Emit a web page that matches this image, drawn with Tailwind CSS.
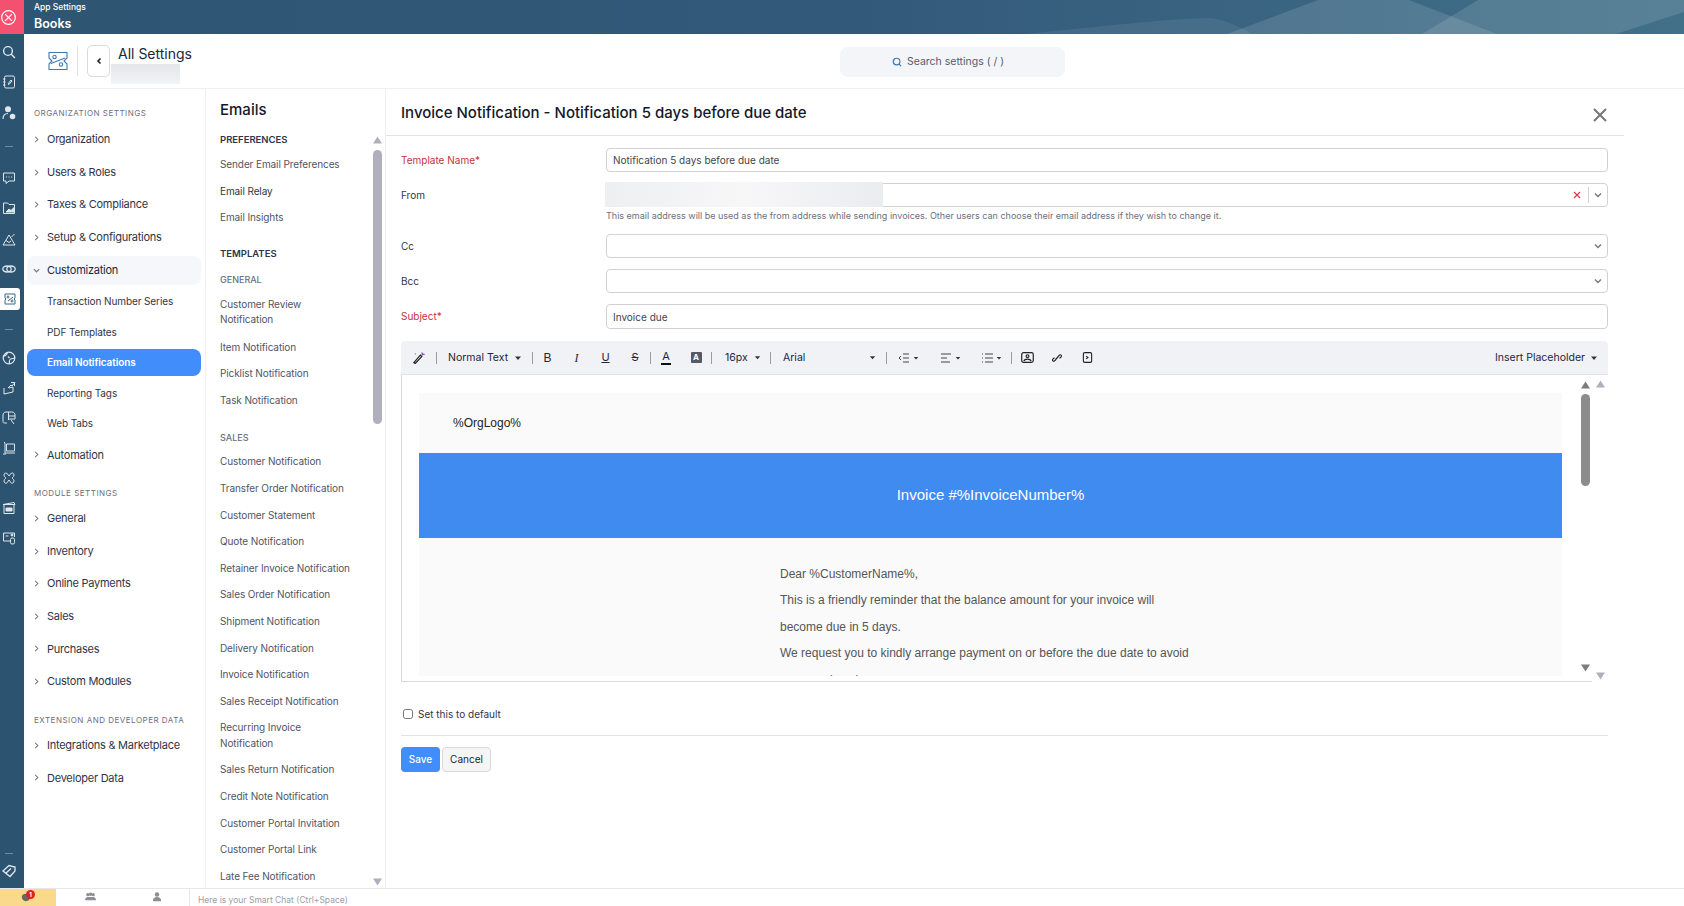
<!DOCTYPE html>
<html lang="en">
<head>
<title>Books - Email Notifications</title>
<meta charset="UTF-8">
<script src="https://cdn.jsdelivr.net/npm/@tailwindcss/browser@4"></script>
</head>
<body class="[font-family:Inter,sans-serif] bg-white text-[#21263c] overflow-hidden">
<svg class="hidden">
  <symbol id="chev-r" viewBox="0 0 8 8"><path d="M2.5 1l3 3-3 3" fill="none" stroke="#777" stroke-width="1.2"/></symbol>
  <symbol id="chev-d" viewBox="0 0 8 8"><path d="M1 2.5l3 3 3-3" fill="none" stroke="#777" stroke-width="1.4"/></symbol>
  <symbol id="caret" viewBox="0 0 8 8"><path d="M1 2.5h6L4 6z" fill="#333"/></symbol>
  <symbol id="arrow-up" viewBox="0 0 10 8"><path d="M5 .5L9.5 7.5H.5z"/></symbol>
  <symbol id="arrow-down" viewBox="0 0 10 8"><path d="M.5 .5h9L5 7.5z"/></symbol>
</svg>
<div class="flex flex-col h-[906px] w-[1684px] overflow-hidden">
  <div class="flex h-[888px]">
    <!-- app rail -->
    <aside class="w-6 shrink-0 bg-[#2c5370] flex flex-col items-start text-[#dfe7ec]">
      <div class="w-6 h-[34px] bg-[#f4506f] flex items-center justify-center shrink-0">
        <svg viewBox="0 0 20 20" class="w-[17px] h-[17px] -ml-[7px]" fill="none" stroke="#fff" stroke-width="1.4"><circle cx="10" cy="10" r="8"/><path d="M6 6l8 8M14 6l-8 8"/></svg>
      </div>
      <div class="h-[3px]"></div>
      <div class="w-5 h-[30px] flex items-center justify-center -ml-[1px]"><svg viewBox="0 0 14 14" class="w-[14px] h-[14px]" fill="none" stroke="currentColor" stroke-width="1.4"><circle cx="6" cy="6" r="4.4"/><path d="M9.3 9.3l3.6 3.6"/></svg></div>
      <div class="w-5 h-[30px] flex items-center justify-center -ml-[1px]"><svg viewBox="0 0 14 14" class="w-[14px] h-[14px]" fill="none" stroke="currentColor"><rect x="2.5" y="1" width="10" height="12" rx="1.5"/><path d="M1 4h2.5M1 7h2.5M1 10h2.5M6 9l3-4 1 1-3 3.5z"/></svg></div>
      <div class="w-5 h-[32px] flex items-center justify-center -ml-[1px]"><svg viewBox="0 0 14 14" class="w-[14px] h-[14px]" fill="none" stroke="currentColor" stroke-width="1.2"><circle cx="6" cy="3.2" r="2.4" fill="currentColor"/><path d="M1 13c0-4 2.5-5.5 5-5.5"/><circle cx="10.5" cy="10.5" r="2.2" fill="currentColor"/></svg></div>
      <div class="w-5 h-[34px] flex items-center justify-center -ml-[1px]"><div class="w-2 h-px bg-[#6f8da1]"></div></div>
      <div class="w-5 h-[30px] flex items-center justify-center -ml-[1px]"><svg viewBox="0 0 14 14" class="w-[14px] h-[14px]" fill="none" stroke="currentColor"><path d="M1.5 2h11v8H7l-3 2.5V10H1.5z"/><path d="M4 6h1M6.5 6h1M9 6h1"/></svg></div>
      <div class="w-5 h-[30px] flex items-center justify-center -ml-[1px]"><svg viewBox="0 0 14 14" class="w-[14px] h-[14px]" fill="none" stroke="currentColor"><path d="M1.5 12.5V2h4l1.5 1.5h5.500V12.500z"/><path d="M4 11l3-3 2 1.500 3-3V11z" fill="currentColor"/></svg></div>
      <div class="w-5 h-[32px] flex items-center justify-center -ml-[1px]"><svg viewBox="0 0 14 14" class="w-[14px] h-[14px]" fill="none" stroke="currentColor"><path d="M1 13L7 3l6 10zM4 8.500l3 2 2-1.500M9.500 5l3-3"/></svg></div>
      <div class="w-5 h-[28px] flex items-center justify-center -ml-[1px]"><svg viewBox="0 0 14 14" class="w-[14px] h-[14px]" fill="none" stroke="currentColor" stroke-width="1.3"><ellipse cx="5" cy="7" rx="4.200" ry="3"/><ellipse cx="9" cy="7" rx="4.200" ry="3"/></svg></div>
      <div class="w-5 h-[22px] my-[5px] bg-white rounded-r-[3px] flex items-center justify-center"><svg viewBox="0 0 14 14" class="w-[14px] h-[14px]" fill="none" stroke="#3d6a8a"><path d="M2 2h10v4l-1 1 1 1v4H2V8l1-1-1-1z"/><circle cx="5" cy="5" r="1"/><circle cx="9" cy="9" r="1"/><path d="M5 9l5-4"/></svg></div>
      <div class="w-5 h-[28px] flex items-center justify-center -ml-[1px]"><div class="w-2 h-px bg-[#6f8da1]"></div></div>
      <div class="w-5 h-[30px] flex items-center justify-center -ml-[1px]"><svg viewBox="0 0 14 14" class="w-[14px] h-[14px]" fill="none" stroke="currentColor" stroke-width="1.2"><circle cx="7" cy="7" r="5.800"/><path d="M1.500 5c2 0 3-1 4-3.500M7.500 12.800c0-3-1-4 2-5s2.800 0 3.300-1.500M6 5.500l1.500 1.500"/></svg></div>
      <div class="w-5 h-[30px] flex items-center justify-center -ml-[1px]"><svg viewBox="0 0 14 14" class="w-[14px] h-[14px]" fill="none" stroke="currentColor"><path d="M2 7v6l9-2V6L7 7"/><path d="M6 7l3-3 1 1 3-3.500M9 1.500h3.500V5"/></svg></div>
      <div class="w-5 h-[30px] flex items-center justify-center -ml-[1px]"><svg viewBox="0 0 14 14" class="w-[14px] h-[14px]" fill="none" stroke="currentColor"><path d="M5 12H2.500C1.500 12 1 11.500 1 10.500V4c0-1.500 1-3 3-3h6c2 0 3 1.500 3 3v4H7"/><path d="M6.500 1v8M6.500 5H13M9 9l3 4"/></svg></div>
      <div class="w-5 h-[30px] flex items-center justify-center -ml-[1px]"><svg viewBox="0 0 14 14" class="w-[14px] h-[14px]" fill="none" stroke="currentColor"><path d="M2 1l1 1v10h10M4.500 3h8v7h-8z"/><path d="M1 13h3"/></svg></div>
      <div class="w-5 h-[30px] flex items-center justify-center -ml-[1px]"><svg viewBox="0 0 14 14" class="w-[14px] h-[14px]" fill="none" stroke="currentColor"><path d="M7 5C5 1 2 1.500 2 4c0 1.500 1 2 2 3-1 1-2 1.500-2 3 0 2.500 3 3 3.500 1L7 9l1.500 2c.5 2 3.500 1.500 3.500-1 0-1.500-1-2-2-3 1-1 2-1.500 2-3 0-2.500-3-3-5 1z"/></svg></div>
      <div class="w-5 h-[30px] flex items-center justify-center -ml-[1px]"><svg viewBox="0 0 14 14" class="w-[14px] h-[14px]" fill="none" stroke="currentColor"><path d="M1 3.500l11-2 1 2H1zM2 4v8.500h10V4"/><path d="M4 7h6v3H4z" fill="currentColor"/></svg></div>
      <div class="w-5 h-[30px] flex items-center justify-center -ml-[1px]"><svg viewBox="0 0 14 14" class="w-[14px] h-[14px]" fill="none" stroke="currentColor"><path d="M8 10H1.500V2h11v4"/><path d="M3.500 5h3"/><rect x="8.500" y="7" width="4" height="6" rx="1.500"/><circle cx="10" cy="4" r="1" fill="currentColor"/></svg></div>
      <div class="mt-auto w-5 h-px mb-[9px] flex justify-center -ml-[1px]"><div class="w-2 h-px bg-[#6f8da1]"></div></div>
      <div class="w-5 h-[16px] mb-[9px] flex items-center justify-center -ml-[1px]"><svg viewBox="0 0 14 14" class="w-[14px] h-[14px]" fill="none" stroke="currentColor" stroke-width="1.300"><path d="M1 7l6-5.500 6 1.500v4L8 12.500z"/><path d="M3.500 9.500l5.500-5"/></svg></div>
    </aside>

    <div class="flex-1 min-w-0 flex flex-col">
      <!-- top banner -->
      <header class="relative h-[34px] shrink-0 bg-gradient-to-r from-[#2e5572] via-[#33597a] to-[#417089] text-white pl-[10px] overflow-hidden">
        <svg class="absolute inset-0 w-full h-full" viewBox="0 0 1660 34" preserveAspectRatio="none">
          <path d="M1002 34C1080 26 1140 19 1184 18c14 0 30 8 44 16z" fill="#fff" opacity=".07"/>
          <path d="M1203 34L1294 0h91l88 34z" fill="#fff" opacity=".12"/>
          <path d="M1398 34L1454 0h206v12l-68 22z" fill="#fff" opacity=".12"/>
        </svg>
        <div class="relative text-[8.500px] font-medium leading-3 pt-[1px]">App Settings</div>
        <div class="relative text-[12.500px] font-semibold leading-[21px]">Books</div>
      </header>

      <!-- settings header -->
      <div class="relative h-[55px] shrink-0 flex items-center border-b border-[#eeeff2]">
        <div class="w-[53px] flex justify-end shrink-0 pr-[9px]">
          <svg viewBox="0 0 20 20" class="w-[20px] h-[20px]" fill="none" stroke="#3d7bb0" stroke-width="1.100"><path d="M1 1.500h18v5.500l-3 3 3 3v5.500H1v-5.500l3-3-3-3z"/><circle cx="6.500" cy="6" r="1.700"/><circle cx="13" cy="13.500" r="1.700"/><path d="M3 12.500L17 7"/></svg>
        </div>
        <div class="w-px h-[30px] bg-[#dfe1e5] mr-[9px]"></div>
        <button class="w-[23px] h-[32px] rounded-[5px] border border-[#d8dade] flex items-center justify-center">
          <svg viewBox="0 0 8 8" class="w-[8px] h-[8px]"><path d="M5.500 1.500L3 4l2.500 2.500" fill="none" stroke="#222" stroke-width="1.600"/></svg>
        </button>
        <div class="relative ml-[8px] self-start pt-[10px]">
          <div class="text-[14px] leading-5 font-normal">All Settings</div>
          <div class="absolute left-[-7px] top-[30px] w-[69px] h-[20px] bg-gradient-to-b from-[#e4e6ea] to-[#f2f3f5]"></div>
        </div>
        <div class="absolute left-[816px] top-[13px] w-[225px] h-[30px] rounded-lg bg-[#f4f5f9] flex items-center justify-center gap-[5px] pr-[9px] text-[10.500px] text-[#555b6e]">
          <svg viewBox="0 0 12 12" class="w-[10px] h-[10px]" fill="none" stroke="#3d7bb0" stroke-width="1.400"><circle cx="5.500" cy="5.500" r="4"/><path d="M8.500 8.500l2.500 2.500"/></svg>
          <span>Search settings ( / )</span>
        </div>
      </div>

      <div class="flex-1 min-h-0 flex bg-white">
        <!-- settings navigation -->
        <nav class="w-[180px] shrink-0 pt-[16px] text-[11px] tracking-[-.25px] text-[#2f3447]">
          <div class="pl-[10px] h-[16px] leading-4 text-[8px] tracking-[.5px] text-[#6c7080]">ORGANIZATION SETTINGS</div>
          <div class="mt-[2px]">
            <a class="flex items-center h-[32.700px] pl-[9px] gap-[7px]"><svg class="w-[7px] h-[7px]"><use href="#chev-r"/></svg>Organization</a>
            <a class="flex items-center h-[32.700px] pl-[9px] gap-[7px]"><svg class="w-[7px] h-[7px]"><use href="#chev-r"/></svg>Users &amp; Roles</a>
            <a class="flex items-center h-[32.700px] pl-[9px] gap-[7px]"><svg class="w-[7px] h-[7px]"><use href="#chev-r"/></svg>Taxes &amp; Compliance</a>
            <a class="flex items-center h-[32.700px] pl-[9px] gap-[7px]"><svg class="w-[7px] h-[7px]"><use href="#chev-r"/></svg>Setup &amp; Configurations</a>
            <a class="flex items-center h-[29px] my-[2px] mx-[3px] rounded-lg bg-[#f6f7fb] pl-[6px] gap-[7px] text-[#21263c]"><svg class="w-[7px] h-[7px]"><use href="#chev-d"/></svg>Customization</a>
            <a class="flex items-center h-[30.200px] pl-[23px] text-[10px] tracking-[-.1px]">Transaction Number Series</a>
            <a class="flex items-center h-[30.200px] pl-[23px] text-[10px] tracking-[-.1px]">PDF Templates</a>
            <a class="flex items-center h-[27px] my-[2px] mx-[3px] rounded-lg bg-[#408dfb] pl-[20px] text-[10px] tracking-[-.1px] font-semibold text-white">Email Notifications</a>
            <a class="flex items-center h-[30.200px] pl-[23px] text-[10px] tracking-[-.1px]">Reporting Tags</a>
            <a class="flex items-center h-[30.200px] pl-[23px] text-[10px] tracking-[-.1px]">Web Tabs</a>
            <a class="flex items-center h-[32.700px] pl-[9px] gap-[7px]"><svg class="w-[7px] h-[7px]"><use href="#chev-r"/></svg>Automation</a>
          </div>
          <div class="pl-[10px] mt-[14px] h-[16px] leading-4 text-[8px] tracking-[.5px] text-[#6c7080]">MODULE SETTINGS</div>
          <div class="mt-[1px]">
            <a class="flex items-center h-[32.600px] pl-[9px] gap-[7px]"><svg class="w-[7px] h-[7px]"><use href="#chev-r"/></svg>General</a>
            <a class="flex items-center h-[32.600px] pl-[9px] gap-[7px]"><svg class="w-[7px] h-[7px]"><use href="#chev-r"/></svg>Inventory</a>
            <a class="flex items-center h-[32.600px] pl-[9px] gap-[7px]"><svg class="w-[7px] h-[7px]"><use href="#chev-r"/></svg>Online Payments</a>
            <a class="flex items-center h-[32.600px] pl-[9px] gap-[7px]"><svg class="w-[7px] h-[7px]"><use href="#chev-r"/></svg>Sales</a>
            <a class="flex items-center h-[32.600px] pl-[9px] gap-[7px]"><svg class="w-[7px] h-[7px]"><use href="#chev-r"/></svg>Purchases</a>
            <a class="flex items-center h-[32.600px] pl-[9px] gap-[7px]"><svg class="w-[7px] h-[7px]"><use href="#chev-r"/></svg>Custom Modules</a>
          </div>
          <div class="pl-[10px] mt-[14px] h-[16px] leading-4 text-[8px] tracking-[.5px] text-[#6c7080]">EXTENSION AND DEVELOPER DATA</div>
          <div class="mt-[1px]">
            <a class="flex items-center h-[32.600px] pl-[9px] gap-[7px]"><svg class="w-[7px] h-[7px]"><use href="#chev-r"/></svg>Integrations &amp; Marketplace</a>
            <a class="flex items-center h-[33px] pl-[9px] gap-[7px]"><svg class="w-[7px] h-[7px]"><use href="#chev-r"/></svg>Developer Data</a>
          </div>
        </nav>

        <!-- email templates list -->
        <section class="relative w-[181px] shrink-0 ml-[1px] border-l border-r border-[#eeeff2] overflow-hidden pl-[14px] text-[10px] tracking-[-.1px] text-[#505565]">
          <h2 class="h-[43px] flex items-center text-[15px] tracking-normal font-medium text-[#15182a]">Emails</h2>
          <div class="h-[16px] flex items-center text-[9.500px] tracking-normal font-semibold text-[#2f3447]">PREFERENCES</div>
          <ul class="mt-[3px]">
            <li class="h-[26.800px] flex items-center">Sender Email Preferences</li>
            <li class="h-[26.800px] flex items-center text-[#2f3447]">Email Relay</li>
            <li class="h-[26.800px] flex items-center">Email Insights</li>
          </ul>
          <div class="mt-[13px] h-[20px] flex items-center text-[9.500px] tracking-normal font-semibold text-[#2f3447]">TEMPLATES</div>
          <div class="mt-[7px] h-[16px] flex items-center text-[9px] tracking-normal font-medium text-[#6c7080]">GENERAL</div>
          <ul class="mt-[6.500px]">
            <li class="py-[3px] leading-[15.500px] w-[110px]">Customer Review Notification</li>
            <li class="h-[26.600px] flex items-center mt-[3px]">Item Notification</li>
            <li class="h-[26.600px] flex items-center">Picklist Notification</li>
            <li class="h-[26.600px] flex items-center">Task Notification</li>
          </ul>
          <div class="mt-[16px] h-[16px] flex items-center text-[9px] tracking-normal font-medium text-[#6c7080]">SALES</div>
          <ul class="mt-[3px]">
            <li class="h-[26.600px] flex items-center">Customer Notification</li>
            <li class="h-[26.600px] flex items-center">Transfer Order Notification</li>
            <li class="h-[26.600px] flex items-center">Customer Statement</li>
            <li class="h-[26.600px] flex items-center">Quote Notification</li>
            <li class="h-[26.600px] flex items-center">Retainer Invoice Notification</li>
            <li class="h-[26.600px] flex items-center">Sales Order Notification</li>
            <li class="h-[26.600px] flex items-center">Shipment Notification</li>
            <li class="h-[26.600px] flex items-center">Delivery Notification</li>
            <li class="h-[26.600px] flex items-center">Invoice Notification</li>
            <li class="h-[26.600px] flex items-center">Sales Receipt Notification</li>
            <li class="py-[5.500px] leading-[15.500px] w-[110px]">Recurring Invoice Notification</li>
            <li class="h-[26.600px] flex items-center">Sales Return Notification</li>
            <li class="h-[26.600px] flex items-center">Credit Note Notification</li>
            <li class="h-[26.600px] flex items-center">Customer Portal Invitation</li>
            <li class="h-[26.600px] flex items-center">Customer Portal Link</li>
            <li class="h-[26.600px] flex items-center">Late Fee Notification</li>
          </ul>
          <svg class="absolute right-[2px] top-[47px] w-[11px] h-[8px] fill-[#b0b0bc]"><use href="#arrow-up"/></svg>
          <div class="absolute right-[3px] top-[61px] w-[9px] h-[274px] rounded-full bg-[#b0b0bc]"></div>
          <svg class="absolute right-[2px] bottom-[2px] w-[11px] h-[8px] fill-[#b0b0bc]"><use href="#arrow-down"/></svg>
        </section>

        <!-- template editor -->
        <main class="relative flex-1 min-w-0 text-[10px] text-[#2f3447]">
          <div class="h-[47px] mr-[60px] pl-[15px] pt-[2px] flex items-center border-b border-[#e2e3e6] text-[15px] font-medium text-[#15182a]">Invoice Notification - Notification 5 days before due date</div>
          <svg viewBox="0 0 14 14" class="absolute left-[1207px] top-[19px] w-[14px] h-[14px]" fill="none" stroke="#777" stroke-width="2"><path d="M1 1l12 12M13 1L1 13"/></svg>
          <div class="pl-[15px] pr-[76px] pt-[12px]">
            <div class="flex items-center h-[24px]">
              <label class="w-[205px] shrink-0 text-[#c8323c]">Template Name*</label>
              <input class="flex-1 h-[24px] rounded-[4px] border border-[#d0d2d6] px-[6px] text-[#40454f] outline-none" value="Notification 5 days before due date">
            </div>
            <div class="flex items-center h-[24px] mt-[11px]">
              <label class="w-[205px] shrink-0">From</label>
              <div class="relative flex-1 h-[24px] rounded-[4px] border border-[#d0d2d6] flex items-center justify-end pr-[5px]">
                <div class="absolute left-[-2px] -top-[2px] w-[278px] h-[25px] bg-gradient-to-r from-[#eeeff1] via-[#f7f7f8] to-[#ebecf0]"></div>
                <svg viewBox="0 0 8 8" class="w-[8px] h-[8px] mr-[7px]" fill="none" stroke="#e0364c" stroke-width="1.200"><path d="M1 1l6 6M7 1L1 7"/></svg>
                <div class="w-px h-[16px] bg-[#d0d2d6] mr-[5px]"></div>
                <svg class="w-[8px] h-[8px]"><use href="#chev-d"/></svg>
              </div>
            </div>
            <div class="ml-[205px] mt-[1px] h-[16px] flex items-center text-[9px] text-[#6c7080]">This email address will be used as the from address while sending invoices. Other users can choose their email address if they wish to change it.</div>
            <div class="flex items-center h-[24px] mt-[10px]">
              <label class="w-[205px] shrink-0">Cc</label>
              <div class="flex-1 h-[24px] rounded-[4px] border border-[#d0d2d6] flex items-center justify-end pr-[5px]"><svg class="w-[8px] h-[8px]"><use href="#chev-d"/></svg></div>
            </div>
            <div class="flex items-center h-[24px] mt-[11px]">
              <label class="w-[205px] shrink-0">Bcc</label>
              <div class="flex-1 h-[24px] rounded-[4px] border border-[#d0d2d6] flex items-center justify-end pr-[5px]"><svg class="w-[8px] h-[8px]"><use href="#chev-d"/></svg></div>
            </div>
            <div class="flex items-center h-[25px] mt-[11px]">
              <label class="w-[205px] shrink-0 text-[#c8323c]">Subject*</label>
              <input class="flex-1 h-[25px] rounded-[4px] border border-[#d0d2d6] px-[6px] text-[#40454f] outline-none" value="Invoice due">
            </div>

            <!-- rich text toolbar -->
            <div class="mt-[12px] h-[34px] rounded-t-[4px] bg-[#f1f2f6] border-b border-[#e2e3e6] flex items-center text-[10.500px] text-[#21263c]">
              <div class="w-[35px] flex justify-center"><svg viewBox="0 0 14 14" class="w-[13px] h-[13px]" fill="none" stroke="#222" stroke-width="1.300"><path d="M2 12.500l7-8 1.500 1.500-7 7.500z"/><path d="M10.500 1.500l.5 1.500 1.500.5-1.500.5-.5 1.500" stroke="#8a4fbf"/><path d="M3 3h1" stroke="#8a4fbf"/></svg></div>
              <div class="w-px h-[12px] bg-[#9a9da6]"></div>
              <div class="w-[95px] pl-[11px] flex items-center gap-[6px]">Normal Text<svg class="w-[8px] h-[8px]"><use href="#caret"/></svg></div>
              <div class="w-px h-[12px] bg-[#9a9da6]"></div>
              <div class="w-[29px] text-center text-[12px] [font-family:'Liberation_Sans',sans-serif]">B</div>
              <div class="w-[29px] text-center text-[12px] italic [font-family:'Liberation_Serif',serif]">I</div>
              <div class="w-[29px] text-center text-[11px] underline">U</div>
              <div class="w-[30px] text-center text-[11px] line-through">S</div>
              <div class="w-px h-[12px] bg-[#9a9da6]"></div>
              <div class="w-[30px] flex justify-center"><span class="border-b-2 border-[#111] leading-[13px] px-[1px] text-[11px]">A</span></div>
              <div class="w-[30px] flex justify-center"><span class="w-[11px] h-[11px] bg-[#555a66] rounded-[1px] text-white text-[8px] leading-[11px] text-center font-bold">A</span></div>
              <div class="w-px h-[12px] bg-[#9a9da6]"></div>
              <div class="w-[58px] pl-[13px] flex items-center gap-[6px]">16px<svg class="w-[7px] h-[7px]"><use href="#caret"/></svg></div>
              <div class="w-px h-[12px] bg-[#9a9da6]"></div>
              <div class="w-[115px] pl-[12px] flex items-center justify-between pr-[10px]">Arial<svg class="w-[7px] h-[7px]"><use href="#caret"/></svg></div>
              <div class="w-px h-[12px] bg-[#9a9da6]"></div>
              <div class="w-[42px] flex justify-center items-center gap-[3px]"><svg viewBox="0 0 12 10" class="w-[12px] h-[10px]" fill="none" stroke="#444"><path d="M5 1h6M5 5h6M5 9h6M3 3L1 5l2 2"/></svg><svg class="w-[6px] h-[6px]"><use href="#caret"/></svg></div>
              <div class="w-[42px] flex justify-center items-center gap-[3px]"><svg viewBox="0 0 12 10" class="w-[12px] h-[10px]" fill="none" stroke="#444"><path d="M1 1h10M1 5h6M1 9h9"/></svg><svg class="w-[6px] h-[6px]"><use href="#caret"/></svg></div>
              <div class="w-[40px] flex justify-center items-center gap-[3px]"><svg viewBox="0 0 12 10" class="w-[12px] h-[10px]" fill="none" stroke="#444"><path d="M4 1h8M4 5h8M4 9h8M1 1h1M1 5h1M1 9h1"/></svg><svg class="w-[6px] h-[6px]"><use href="#caret"/></svg></div>
              <div class="w-px h-[12px] bg-[#9a9da6]"></div>
              <div class="w-[30px] flex justify-center"><svg viewBox="0 0 14 12" class="w-[13px] h-[11px]" fill="none" stroke="#222" stroke-width="1.300"><rect x=".7" y=".7" width="12.600" height="10.600" rx="2"/><circle cx="7" cy="4.500" r="1.500"/><path d="M3 10c1-3 7-3 8 0"/></svg></div>
              <div class="w-[30px] flex justify-center"><svg viewBox="0 0 12 12" class="w-[10px] h-[10px]" fill="none" stroke="#222" stroke-width="1.400"><path d="M5 7.500L2.800 9.700a1.500 1.500 0 0 1-2-2L3 5.500M7 4.500l2.200-2.200a1.500 1.500 0 0 1 2 2L9 6.500M4.500 7.500l3-3"/></svg></div>
              <div class="w-[30px] flex justify-center"><svg viewBox="0 0 12 12" class="w-[11px] h-[11px]" fill="none" stroke="#222" stroke-width="1.200"><rect x="1.500" y=".7" width="9" height="10.600" rx="1.500"/><path d="M4.500 4.500L6.500 6l-2 1.500"/></svg></div>
              <div class="ml-auto pr-[10px] flex items-center gap-[5px]">Insert Placeholder<svg class="w-[8px] h-[8px]"><use href="#caret"/></svg></div>
            </div>

            <!-- editor body -->
            <div class="relative h-[307px] w-[1191px] border-l border-b border-[#d8dade] overflow-hidden pl-[17px] pt-[18px] [font-family:'Liberation_Sans',sans-serif]">
              <div class="w-[1143px] h-[283px] bg-[#fafafa] overflow-hidden">
                <div class="h-[60px] pl-[34px] flex items-center text-[12px] text-[#222]">%OrgLogo%</div>
                <div class="h-[85px] bg-[#408bf0] flex items-center justify-center text-[15px] text-white">Invoice #%InvoiceNumber%</div>
                <div class="pl-[361px] pt-[23px] text-[12px] leading-[26.400px] text-[#555]">
                  <p>Dear %CustomerName%,</p>
                  <p>This is a friendly reminder that the balance amount for your invoice will</p>
                  <p>become due in 5 days.</p>
                  <p>We request you to kindly arrange payment on or before the due date to avoid</p>
                  <p>any overdue charges.</p>
                </div>
              </div>
              <svg class="absolute left-[1178px] top-[6px] w-[11px] h-[8px] fill-[#7d7d7d]"><use href="#arrow-up"/></svg>
              <div class="absolute left-[1179px] top-[19px] w-[9px] h-[92px] rounded-full bg-[#8c8c8c]"></div>
              <svg class="absolute left-[1178px] top-[289px] w-[11px] h-[8px] fill-[#7d7d7d]"><use href="#arrow-down"/></svg>
            </div>
            <svg class="absolute left-[1209px] top-[291px] w-[11px] h-[8px] fill-[#b0b0bc]"><use href="#arrow-up"/></svg>
            <svg class="absolute left-[1209px] top-[583px] w-[11px] h-[8px] fill-[#b0b0bc]"><use href="#arrow-down"/></svg>

            <label class="flex items-center gap-[5px] mt-[25px] h-[14px] text-[10px]">
              <input type="checkbox" class="w-[10px] h-[10px] ml-[2px]">Set this to default
            </label>
            <div class="mt-[14px] border-t border-[#e2e3e6] pt-[11px] flex gap-[2px]">
              <button class="w-[39px] h-[25px] rounded-[4px] bg-[#408dfb] text-white text-[10px] font-medium">Save</button>
              <button class="w-[49px] h-[25px] rounded-[4px] bg-[#f5f5f5] border border-[#d8dade] text-[10px] text-[#21263c]">Cancel</button>
            </div>
          </div>
        </main>
      </div>
    </div>
  </div>

  <!-- chat bar -->
  <footer class="h-[18px] shrink-0 flex border-t border-[#e6e7ea] bg-white text-[9px] overflow-hidden">
    <div class="relative w-[56px] bg-[#fbd98c] flex flex-col items-center">
      <svg viewBox="0 0 12 12" class="w-[10px] h-[10px] mt-[3px] -ml-[4px] shrink-0" fill="#666"><path d="M1 6c0-3 2-4 5-4s5 1 5 4-2 5-5 5-5-2-5-5z"/></svg>
      <span class="absolute left-[26px] top-[1px] w-[9px] h-[9px] rounded-full bg-[#e02020] text-white text-[6px] leading-[9px] text-center font-bold">1</span>
      <span class="leading-3 mt-[2px] text-[#444]">Chats</span>
    </div>
    <div class="w-[68px] flex flex-col items-center">
      <svg viewBox="0 0 14 12" class="w-[11px] h-[10px] mt-[3px] shrink-0" fill="#8c8f96"><circle cx="3.500" cy="3" r="2"/><circle cx="7" cy="2.500" r="2.200"/><circle cx="10.500" cy="3" r="2"/><path d="M0 10c0-3 2-4 3.500-4h7c1.500 0 3.500 1 3.500 4z"/></svg>
      <span class="leading-3 mt-[2px] text-[#555]">Channels</span>
    </div>
    <div class="w-[65px] flex flex-col items-center">
      <svg viewBox="0 0 12 12" class="w-[10px] h-[10px] mt-[3px] shrink-0" fill="#8c8f96"><circle cx="6" cy="3" r="2.700"/><path d="M1 11c0-3.500 2-5 5-5s5 1.500 5 5z"/></svg>
      <span class="leading-3 mt-[2px] text-[#555]">Contacts</span>
    </div>
    <div class="pl-[8px] pt-[5px] border-l border-[#e6e7ea] text-[#9a9da6] text-[8.500px] leading-3">Here is your Smart Chat (Ctrl+Space)</div>
  </footer>
</div>
</body>
</html>
